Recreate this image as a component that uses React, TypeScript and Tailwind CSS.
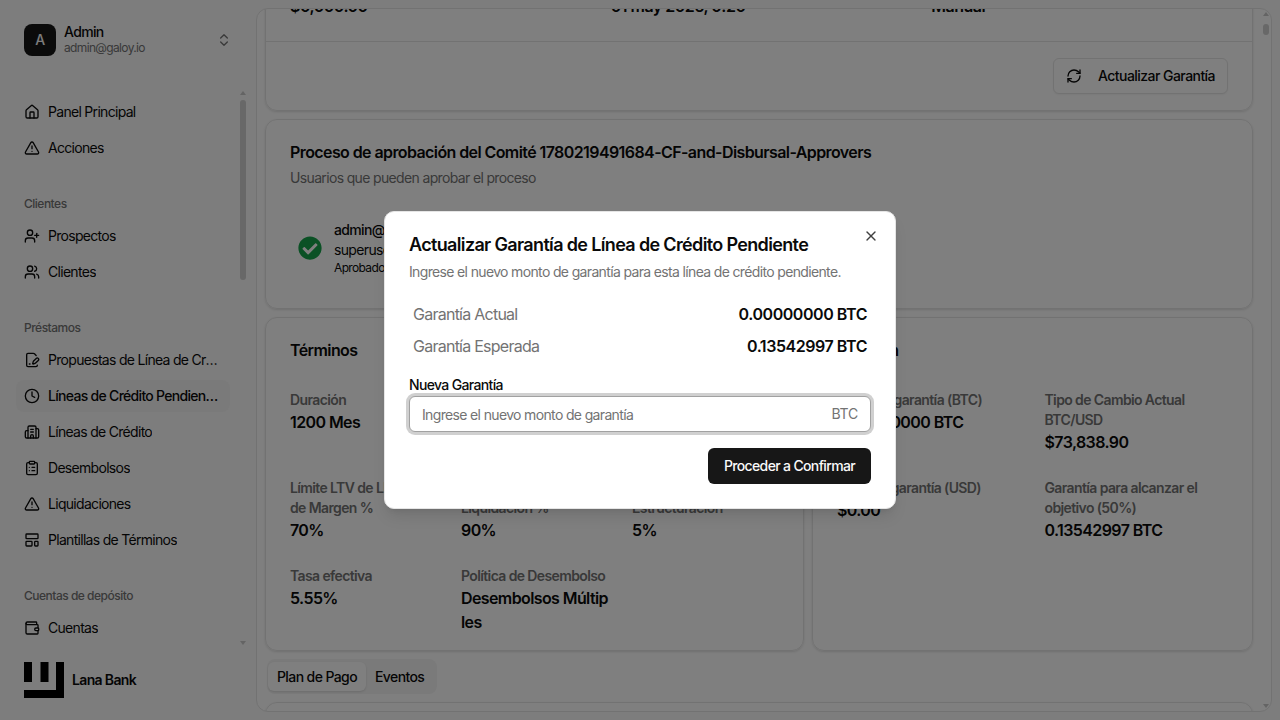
import {
  Building2,
  ChevronsUpDown,
  ClipboardList,
  Clock,
  FilePenLine,
  House,
  LayoutTemplate,
  RefreshCw,
  TriangleAlert,
  UserPlus,
  Users,
  Wallet,
  X,
} from "lucide-react"
import { FaCheckCircle } from "react-icons/fa"

const navGroups = [
  {
    label: "",
    items: [
      { icon: House, title: "Panel Principal" },
      { icon: TriangleAlert, title: "Acciones" },
    ],
  },
  {
    label: "Clientes",
    items: [
      { icon: UserPlus, title: "Prospectos" },
      { icon: Users, title: "Clientes" },
    ],
  },
  {
    label: "Préstamos",
    items: [
      { icon: FilePenLine, title: "Propuestas de Línea de Crédito" },
      { icon: Clock, title: "Líneas de Crédito Pendientes", active: true },
      { icon: Building2, title: "Líneas de Crédito" },
      { icon: ClipboardList, title: "Desembolsos" },
      { icon: TriangleAlert, title: "Liquidaciones" },
      { icon: LayoutTemplate, title: "Plantillas de Términos" },
    ],
  },
  {
    label: "Cuentas de depósito",
    items: [{ icon: Wallet, title: "Cuentas" }],
  },
]

const terms = [
  { label: "Duración", value: "1200 Mes" },
  { label: "Intervalo de Pago de Interés", value: "Mensual" },
  { label: "Tasa de Interés Anual", value: "5%" },
  { label: "Límite LTV de Llamada de Margen %", value: "70%" },
  { label: "Límite LTV de Liquidación %", value: "90%" },
  { label: "Comisión de Estructuración", value: "5%" },
  { label: "Tasa efectiva", value: "5.55%" },
  { label: "Política de Desembolso", value: "Desembolsos Múltiples" },
]

const ratio = [
  { label: "Saldo de garantía (BTC)", value: "0.00000000 BTC" },
  { label: "Tipo de Cambio Actual BTC/USD", value: "$73,838.90" },
  { label: "Valor de garantía (USD)", value: "$0.00" },
  { label: "Garantía para alcanzar el objetivo (50%)", value: "0.13542997 BTC" },
]

function Detail({ label, value }: { label: string; value: string }) {
  return (
    <div>
      <div className="text-sm font-semibold tracking-[-0.62px] text-[#737373]">{label}</div>
      <div className="text-base font-semibold tracking-[-0.6px] break-all">{value}</div>
    </div>
  )
}

export default function App() {
  return (
    <div className="relative flex h-screen overflow-hidden bg-[#fafafa] font-['Inter',sans-serif] tracking-[-0.65px] text-[#0a0a0a]">
      {/* Sidebar */}
      <aside className="relative flex w-[256px] shrink-0 flex-col">
        <div className="flex h-[96px] shrink-0 items-start px-6 pt-6">
          <div className="flex h-8 w-8 items-center justify-center rounded-lg bg-[#171717] text-sm font-medium text-[#fafafa]">
            A
          </div>
          <div className="ml-2 flex-1">
            <div className="text-sm leading-4 font-medium">Admin</div>
            <div className="text-xs leading-4 text-[#737373]">admin@galoy.io</div>
          </div>
          <ChevronsUpDown className="mt-2 h-4 w-4 text-[#737373]" />
        </div>

        <nav className="flex h-[554px] flex-col gap-6 overflow-hidden pr-[26px] pl-4 tracking-[-0.7px]">
          {navGroups.map((group, index) => (
            <div key={index}>
              {group.label && (
                <div className="flex h-8 items-center px-2 text-xs font-medium tracking-[-0.5px] text-[#737373]">
                  {group.label}
                </div>
              )}
              <div className="flex flex-col gap-1">
                {group.items.map((item) => (
                  <div
                    key={item.title}
                    className={`flex h-8 items-center gap-2 rounded-lg px-2 text-sm ${item.active ? "bg-[#f5f5f5] font-medium" : ""}`}
                  >
                    <item.icon className="h-4 w-4 shrink-0" />
                    <span className="truncate">{item.title}</span>
                  </div>
                ))}
              </div>
            </div>
          ))}
        </nav>

        <div className="flex items-center gap-2 px-6 pt-3">
          <svg width="40" height="36" viewBox="0 0 40 36" className="shrink-0">
            <path d="M0 0h8v20H0zM16.500 0h8v20h-8zM32 0h8v36H0v-8h32z" fill="#000" />
          </svg>
          <span className="text-sm font-semibold">Lana Bank</span>
        </div>

        {/* sidebar scrollbar */}
        <div className="absolute top-[100px] left-[240px] h-[180px] w-[6px] rounded-full bg-[#d0d0d0]"></div>
        <div className="absolute top-[91px] left-[240px] h-0 w-0 border-x-[3px] border-b-[4px] border-x-transparent border-b-[#c8c8c8]"></div>
        <div className="absolute top-[641px] left-[240px] h-0 w-0 border-x-[3px] border-t-[4px] border-x-transparent border-t-[#c8c8c8]"></div>
      </aside>

      {/* Main panel */}
      <main className="relative my-2 mr-2 flex-1 overflow-hidden rounded-xl border border-[#e5e5e5] bg-white pr-[18px] pl-2">
        <div className="mt-[-16px] flex flex-col gap-2">
          <section className="rounded-xl border border-[#e5e5e5] shadow-sm">
            <div className="grid grid-cols-3 gap-6 border-b border-[#e5e5e5] px-6 pb-[23px] text-base font-semibold tracking-[-0.5px]">
              <div>$0,000.00</div>
              <div>01 may 2026, 0:20</div>
              <div>Manual</div>
            </div>
            <div className="flex justify-end px-6 py-4">
              <button className="flex h-9 items-center gap-4 rounded-md border border-[#e5e5e5] bg-white px-3 text-sm font-medium tracking-[-0.55px] shadow-xs">
                <RefreshCw className="h-4 w-4" />
                Actualizar Garantía
              </button>
            </div>
          </section>

          <section className="h-[190px] rounded-xl border border-[#e5e5e5] px-6 pt-5 shadow-sm">
            <h2 className="text-base font-semibold tracking-[-0.59px]">
              Proceso de aprobación del Comité 1780219491684-CF-and-Disbursal-Approvers
            </h2>
            <p className="mt-1 text-sm text-[#737373]">Usuarios que pueden aprobar el proceso</p>
            <div className="mt-8 flex items-center gap-3 pl-2">
              <FaCheckCircle className="h-6 w-6 text-[#16a34a]" />
              <div>
                <div className="text-sm font-medium">admin@galoy.io</div>
                <div className="text-sm">superuser</div>
                <div className="text-xs">Aprobado el 31 may 2026</div>
              </div>
            </div>
          </section>

          <div className="grid grid-cols-[539px_441px] gap-2">
            <section className="h-[334px] rounded-xl border border-[#e5e5e5] px-6 pt-5 shadow-sm">
              <h2 className="text-base font-semibold tracking-[-0.59px]">Términos</h2>
              <div className="mt-7 grid grid-cols-3 gap-6">
                {terms.map((term) => (
                  <Detail key={term.label} label={term.label} value={term.value} />
                ))}
              </div>
            </section>
            <section className="h-[334px] rounded-xl border border-[#e5e5e5] px-6 pt-5 shadow-sm">
              <h2 className="text-base font-semibold tracking-[-0.59px]">Relación</h2>
              <div className="mt-7 grid grid-cols-2 gap-6">
                {ratio.map((item) => (
                  <Detail key={item.label} label={item.label} value={item.value} />
                ))}
              </div>
            </section>
          </div>

          <div className="ml-[2px] flex h-[35px] w-[170px] items-center rounded-lg bg-[#f5f5f5] pl-px text-sm font-medium tracking-[-0.6px] whitespace-nowrap">
            <div className="flex h-[29px] w-[98px] items-center justify-center rounded-md bg-white shadow-sm">Plan de Pago</div>
            <div className="flex h-[29px] items-center px-[9px]">Eventos</div>
          </div>

          <section className="h-[100px] rounded-xl border border-[#e5e5e5] shadow-sm"></section>
        </div>

        {/* panel scrollbar */}
        <div className="absolute top-[15px] right-[2px] h-[11px] w-[6px] rounded-full bg-[#d0d0d0]"></div>
        <div className="absolute top-[3px] right-[2px] h-0 w-0 border-x-[3px] border-b-[4px] border-x-transparent border-b-[#c8c8c8]"></div>
        <div className="absolute right-[2px] bottom-[3px] h-0 w-0 border-x-[3px] border-t-[4px] border-x-transparent border-t-[#c8c8c8]"></div>
      </main>

      {/* Dialog */}
      <div className="absolute inset-0 flex items-center justify-center bg-black/50">
        <div className="relative flex w-[512px] flex-col rounded-[10px] border border-[#e5e5e5] bg-white p-6 shadow-lg">
          <h2 className="text-lg leading-none font-semibold">
            Actualizar Garantía de Línea de Crédito Pendiente
          </h2>
          <p className="mt-2 text-sm text-[#737373]">
            Ingrese el nuevo monto de garantía para esta línea de crédito pendiente.
          </p>
          <X className="absolute top-[16px] right-[16px] h-4 w-4 text-[#404040]" />

          <div className="mt-4 flex h-8 items-center justify-between px-1">
            <span className="text-base tracking-[-0.75px] text-[#737373]">Garantía Actual</span>
            <span className="text-base font-semibold tracking-[-0.45px]">0.00000000 BTC</span>
          </div>
          <div className="flex h-8 items-center justify-between px-1">
            <span className="text-base tracking-[-0.75px] text-[#737373]">Garantía Esperada</span>
            <span className="text-base font-semibold tracking-[-0.45px]">0.13542997 BTC</span>
          </div>

          <label className="mt-4 text-sm leading-none font-medium">Nueva Garantía</label>
          <div className="relative mt-1">
            <input
              placeholder="Ingrese el nuevo monto de garantía"
              className="h-9 w-full rounded-md border border-[#a1a1a1] bg-white px-3 text-sm ring-[3px] ring-[#a1a1a1]/50 outline-none placeholder:text-[#737373]"
            />
            <span className="absolute top-[8px] right-[13px] text-sm tracking-[-0.2px] text-[#737373]">BTC</span>
          </div>

          <div className="mt-4 flex justify-end">
            <button className="h-9 rounded-md bg-[#171717] px-4 text-sm font-medium text-[#fafafa]">
              Proceder a Confirmar
            </button>
          </div>
        </div>
      </div>
    </div>
  )
}
